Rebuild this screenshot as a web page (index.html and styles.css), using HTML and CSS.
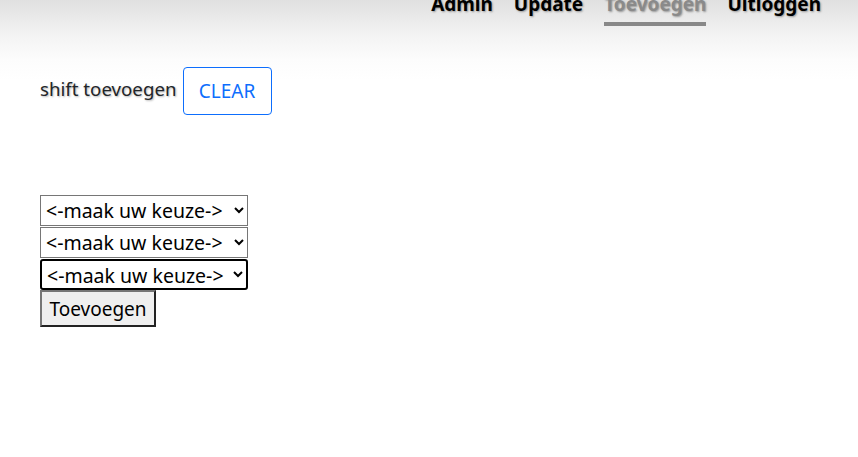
FILE: index.html
```html
<!DOCTYPE html>
<html lang="nl">
<head>
<meta charset="utf-8">
<link rel="stylesheet" href="styles.css">
</head>
<body>
<header class="topbar">
  <nav class="nav">
    <a class="nav-link" href="#">Admin</a>
    <a class="nav-link" href="#">Update</a>
    <a class="nav-link active" href="#">Toevoegen</a>
    <a class="nav-link" href="#">Uitloggen</a>
  </nav>
</header>
<main class="content">
  <div class="title-row">
    <span class="title">shift toevoegen</span>
    <button class="btn-clear" type="button">CLEAR</button>
  </div>
  <form class="shift-form">
    <select class="pick"><option>&lt;-maak uw keuze-&gt;</option></select>
    <select class="pick"><option>&lt;-maak uw keuze-&gt;</option></select>
    <select class="pick focused"><option>&lt;-maak uw keuze-&gt;</option></select>
    <button class="btn-add" type="button">Toevoegen</button>
  </form>
</main>
</body>
</html>
```
FILE: styles.css
```css
html, body {
  margin: 0;
  padding: 0;
}
body {
  font-family: "Noto Sans", "Open Sans", sans-serif;
  color: #212529;
  background: linear-gradient(to bottom, #e0e0e0 0px, #f3f3f3 35px, #fcfcfc 60px, #ffffff 80px, #ffffff 100%);
  min-height: 457px;
}
.topbar {
  height: 30px;
  overflow: hidden;
}
.nav {
  display: flex;
  justify-content: flex-end;
  gap: 21px;
  padding-right: 37px;
  margin-top: -10px;
}
.nav-link {
  font-size: 19px;
  font-weight: 700;
  color: #000;
  text-decoration: none;
  text-shadow: 1px 1px 2px rgba(0,0,0,0.35);
  padding-bottom: 4px;
  line-height: 28px;
  border-bottom: 4px solid transparent;
}
.nav-link.active {
  color: #8a8a8a;
  border-bottom-color: #888;
}
.content {
  padding: 37px 40px 0;
}
.title-row {
  display: flex;
  align-items: flex-start;
  gap: 6px;
}
.title {
  font-size: 18.7px;
  line-height: 26px;
  margin-top: 9px;
  text-shadow: 1px 1px 2px rgba(0,0,0,0.3);
}
.btn-clear {
  font-family: inherit;
  font-size: 19px;
  color: #0d6efd;
  background: #fff;
  border: 1px solid #0d6efd;
  border-radius: 4px;
  width: 89px;
  height: 48px;
  padding: 0;
}
.shift-form {
  display: flex;
  flex-direction: column;
  align-items: flex-start;
  margin-top: 80px;
}
.pick {
  font-family: inherit;
  font-size: 19.5px;
  width: 208px;
  height: 31px;
  padding: 0 1px;
  margin: 0 0 1px 0;
  color: #000;
  background: #fff;
  border: 1px solid #767676;
  border-radius: 0;
}
.pick.focused {
  border: 2px solid #000;
  border-radius: 3px;
  margin-bottom: 0;
}
.btn-add {
  font-family: inherit;
  font-size: 19px;
  color: #000;
  background: #efefef;
  border: 2px solid;
  border-color: #767676 #222 #222 #767676;
  width: 116px;
  height: 37px;
  padding: 0;
}
```
